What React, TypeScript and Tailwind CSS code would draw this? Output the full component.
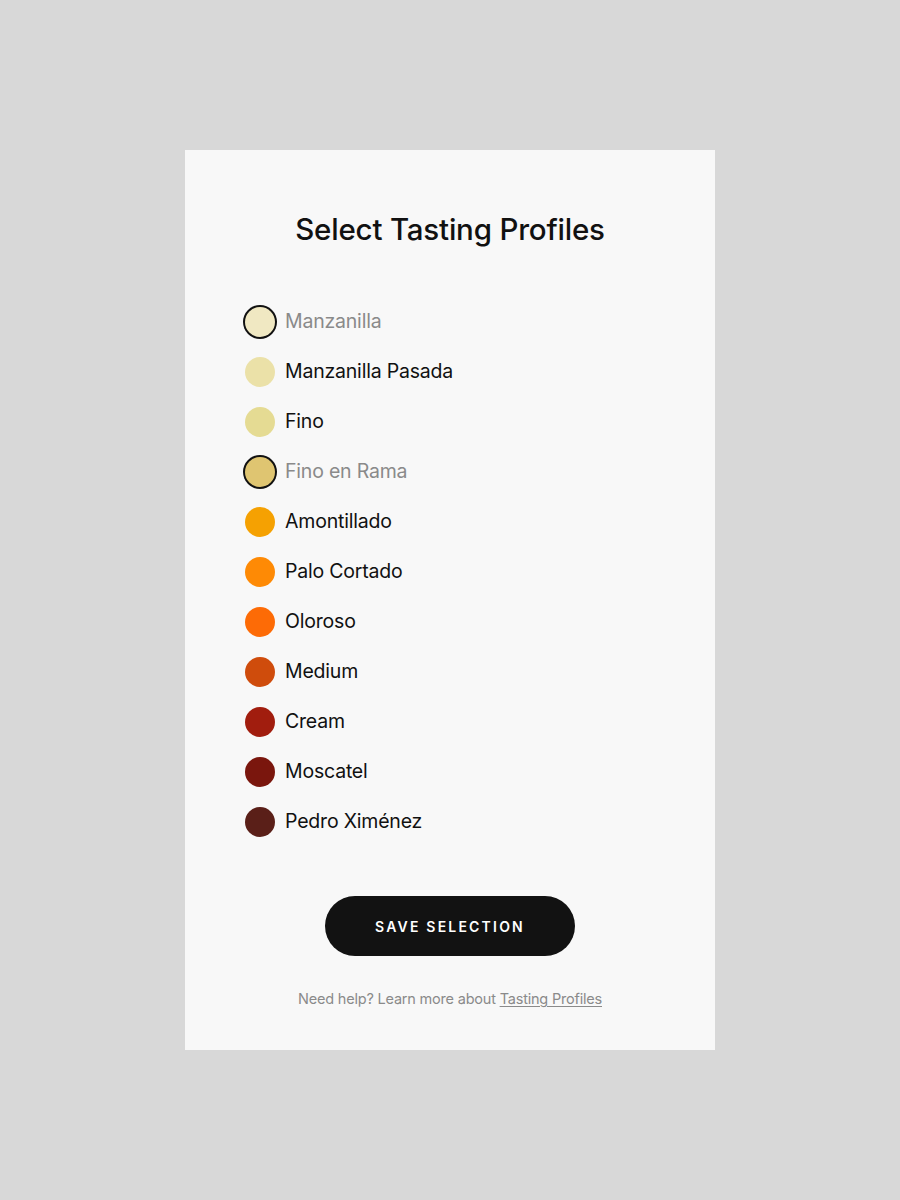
import { useState } from "react";

interface Profile {
  id: string;
  label: string;
  color: string;
}

const profiles: Profile[] = [
  { id: "manzanilla", label: "Manzanilla", color: "#f0e8c2" },
  { id: "manzanilla-pasada", label: "Manzanilla Pasada", color: "#ebe1a8" },
  { id: "fino", label: "Fino", color: "#e5db93" },
  { id: "fino-en-rama", label: "Fino en Rama", color: "#dfc571" },
  { id: "amontillado", label: "Amontillado", color: "#f5a102" },
  { id: "palo-cortado", label: "Palo Cortado", color: "#fe8a05" },
  { id: "oloroso", label: "Oloroso", color: "#fd6b06" },
  { id: "medium", label: "Medium", color: "#cf4c0c" },
  { id: "cream", label: "Cream", color: "#a11d0e" },
  { id: "moscatel", label: "Moscatel", color: "#7a160d" },
  { id: "pedro-ximenez", label: "Pedro Ximénez", color: "#5a1f18" },
];

export default function App() {
  const [selected, setSelected] = useState<string[]>(["manzanilla", "fino-en-rama"]);

  const toggle = (id: string) => {
    setSelected((prev) =>
      prev.includes(id) ? prev.filter((p) => p !== id) : [...prev, id]
    );
  };

  return (
    <div
      className="min-h-[1200px] bg-[#d8d8d8] flex justify-center pt-[150px]"
      style={{ fontFamily: "Inter, 'Noto Sans', sans-serif" }}
    >
      <div className="w-[530px] h-[900px] bg-[#f8f8f8] flex flex-col px-[60px] pt-[59px]">
        <h1 className="text-center text-[29.5px] font-medium text-[#111] tracking-[-0.2px] leading-[40px]">
          Select Tasting Profiles
        </h1>

        <ul className="mt-[58px] flex flex-col gap-[20px]">
          {profiles.map((profile) => {
            const isSelected = selected.includes(profile.id);
            return (
              <li key={profile.id}>
                <button
                  type="button"
                  onClick={() => toggle(profile.id)}
                  className="flex items-center gap-[10px] h-[30px]"
                >
                  <span
                    className={`w-[30px] h-[30px] rounded-full ${
                      isSelected ? "ring-2 ring-[#111]" : ""
                    }`}
                    style={{ backgroundColor: profile.color }}
                  ></span>
                  <span
                    className={`text-[19.5px] tracking-[-0.2px] ${
                      isSelected ? "text-[#8a8a8a]" : "text-[#111]"
                    }`}
                  >
                    {profile.label}
                  </span>
                </button>
              </li>
            );
          })}
        </ul>

        <div className="mt-[59px] flex justify-center">
          <button
            type="button"
            className="w-[250px] h-[60px] rounded-full bg-[#121212] text-white text-[14px] font-semibold tracking-[2.2px]"
          >
            SAVE SELECTION
          </button>
        </div>

        <p className="mt-[32px] text-center text-[14.5px] text-[#8a8a8a] tracking-[-0.2px]">
          Need help? Learn more about{" "}
          <a href="#" className="underline underline-offset-2">
            Tasting Profiles
          </a>
        </p>
      </div>
    </div>
  );
}
